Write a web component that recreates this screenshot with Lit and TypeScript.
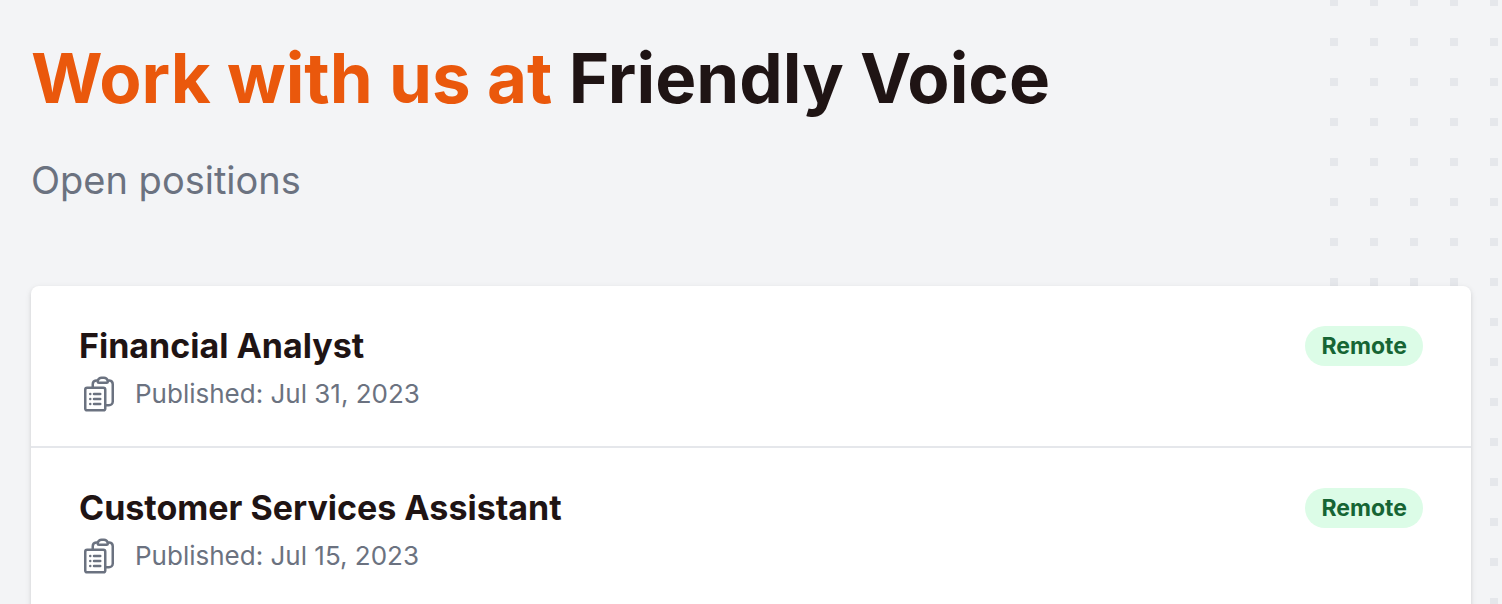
import { LitElement, html, css } from "lit";
import { customElement } from "lit/decorators.js";

interface Position {
  title: string;
  published: string;
  place: string;
}

const positions: Position[] = [
  { title: "Financial Analyst", published: "Jul 31, 2023", place: "Remote" },
  { title: "Customer Services Assistant", published: "Jul 15, 2023", place: "Remote" },
];

const clipboardIcon = html`
  <svg class="icon" viewBox="0 0 24 24" fill="none" stroke="currentColor" stroke-width="1.5"
    stroke-linecap="round" stroke-linejoin="round" aria-hidden="true">
    <path d="M9 12h3.75M9 15h3.75M9 18h3.75m3 .75H18a2.25 2.25 0 002.25-2.25V6.108c0-1.135-.845-2.098-1.976-2.192a48.424 48.424 0 00-1.123-.08m-5.801 0c-.065.21-.1.433-.1.664 0 .414.336.75.75.75h4.5a.75.75 0 00.75-.75 2.25 2.25 0 00-.1-.664m-5.8 0A2.251 2.251 0 0113.5 2.25H15c1.012 0 1.867.668 2.15 1.586m-5.8 0c-.376.023-.75.05-1.124.08C9.095 4.01 8.25 4.973 8.25 6.108V8.25m0 0H4.875c-.621 0-1.125.504-1.125 1.125v11.25c0 .621.504 1.125 1.125 1.125h9.75c.621 0 1.125-.504 1.125-1.125V9.375c0-.621-.504-1.125-1.125-1.125H8.25zM6.75 12h.008v.008H6.75V12zm0 3h.008v.008H6.75V15zm0 3h.008v.008H6.75V18z"/>
  </svg>`;

@customElement("app-root")
export class AppRoot extends LitElement {
  static styles = css`
    :host {
      display: block;
      position: relative;
      height: 100vh;
      overflow: hidden;
      background: #f3f4f6;
      color: #1f1414;
      font-family: Inter, "Liberation Sans", sans-serif;
    }
    .dots {
      position: absolute;
      top: 0;
      right: 0;
      bottom: 0;
      width: 172px;
      background: conic-gradient(from 270deg at 8px 8px, #e5e7eb 90deg, transparent 0) 0 -2px / 40px 40px;
    }
    .page {
      position: relative;
      padding: 32px 31px;
    }
    h1 {
      margin: 0;
      font-size: 69px;
      line-height: 92px;
      font-weight: 700;
    }
    .accent {
      color: #ea580c;
    }
    .subtitle {
      margin: 28px 0 78px;
      color: #6b7280;
      font-size: 38px;
      line-height: 56px;
    }
    .card {
      margin: 0;
      padding: 0;
      list-style: none;
      background: #fff;
      border-radius: 8px 8px 0 0;
      box-shadow: 0 2px 6px rgb(0 0 0 / 0.1), 0 2px 4px rgb(0 0 0 / 0.06);
    }
    .row {
      display: block;
      padding: 40px 48px 32px;
      color: inherit;
      text-decoration: none;
    }
    li + li {
      border-top: 2px solid #e5e7eb;
    }
    .head {
      display: flex;
      justify-content: space-between;
      align-items: center;
    }
    h2 {
      margin: 0;
      font-size: 34px;
      line-height: 40px;
      font-weight: 700;
    }
    .badge {
      padding: 0 16px;
      border-radius: 20px;
      background: #dcfce7;
      color: #166534;
      font-size: 23px;
      line-height: 40px;
      font-weight: 700;
    }
    .meta {
      display: flex;
      align-items: center;
      gap: 16px;
      margin: 8px 0 0;
      color: #6b7280;
      font-size: 26px;
      line-height: 40px;
    }
    .icon {
      width: 40px;
      height: 40px;
    }
  `;

  render() {
    return html`
      <div class="dots"></div>
      <main class="page">
        <h1><span class="accent">Work with us at</span> Friendly Voice</h1>
        <p class="subtitle">Open positions</p>
        <ul class="card">
          ${positions.map(
            (p) => html`
              <li>
                <a class="row" href="#">
                  <div class="head">
                    <h2>${p.title}</h2>
                    <span class="badge">${p.place}</span>
                  </div>
                  <p class="meta">${clipboardIcon}<span>Published: ${p.published}</span></p>
                </a>
              </li>`
          )}
        </ul>
      </main>
    `;
  }
}
